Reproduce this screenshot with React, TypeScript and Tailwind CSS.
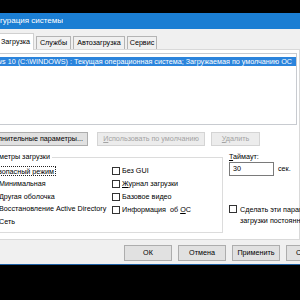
import React from 'react';

const Box: React.FC = () => (
  <div className="w-[8px] h-[8px] shrink-0 border border-[#333333] bg-white" />
);

const TabBtn: React.FC<{ label: string; w: string }> = ({ label, w }) => (
  <div
    className={`${w} ml-[2px] h-[13px] shrink-0 flex items-center justify-center border-t border-l border-r border-[#b4b4b4] bg-[#f0f0f0] whitespace-nowrap`}
  >
    {label}
  </div>
);

const DlgButton: React.FC<{ label: string }> = ({ label }) => (
  <div className="w-[48px] h-[16px] shrink-0 flex items-center justify-center border border-[#adadad] bg-[#e1e1e1] whitespace-nowrap overflow-hidden">
    {label}
  </div>
);

export default function App() {
  return (
    <div className="w-[300px] h-[300px] bg-black overflow-hidden flex flex-col text-[7.2px] leading-none text-black font-['Liberation_Sans',Arial,sans-serif]">
      {/* black strip above the window */}
      <div className="h-[13px] shrink-0" />

      {/* Title bar */}
      <div className="h-[16px] shrink-0 bg-[#1b7ed3] flex items-center">
        <div className="w-[63px] flex justify-end overflow-hidden whitespace-nowrap text-white text-[8px]">
          Конфигурация системы
        </div>
      </div>

      {/* Window body */}
      <div className="h-[235px] shrink-0 bg-[#f0f0f0] flex flex-col">
        {/* Tabs */}
        <div className="h-[20px] shrink-0 flex items-end">
          <div className="relative w-[36px] -ml-[2px] h-[17px] -mb-px shrink-0 flex items-center pl-[3px] bg-white border-t border-r border-[#d0d0d0] whitespace-nowrap">
            Загрузка
          </div>
          <TabBtn label="Службы" w="w-[35px]" />
          <TabBtn label="Автозагрузка" w="w-[52px]" />
          <TabBtn label="Сервис" w="w-[30px]" />
        </div>

        {/* Tab page */}
        <div className="h-[191px] shrink-0 bg-white border-t border-r border-b border-[#d9d9d9] flex flex-col">
          {/* Boot list */}
          <div className="mt-[3px] mr-[2px] h-[72px] shrink-0 border-t border-r border-b border-[#c8cbd0] pt-[3px]">
            <div className="h-[9px] bg-[#2b84dc] flex justify-end items-center overflow-hidden whitespace-nowrap text-white pr-[4px]">
              {'Windows 10 (C:\\WINDOWS) : Текущая операционная система; Загружаемая по умолчанию ОС'}
            </div>
          </div>

          {/* Buttons */}
          <div className="mt-[7px] h-[14px] shrink-0 flex">
            <div className="w-[88px] shrink-0 flex justify-end items-center pr-[4px] overflow-hidden whitespace-nowrap border-t border-r border-b border-[#adadad] bg-[#e1e1e1]">
              Дополнительные параметры...
            </div>
            <div className="ml-[9px] w-[108px] shrink-0 flex justify-center items-center whitespace-nowrap border border-[#d4d4d4] bg-[#ececec] text-[#a3a3a3]">
              <span>
                <span className="underline">И</span>спользовать по умолчанию
              </span>
            </div>
            <div className="ml-[6px] w-[49px] shrink-0 flex justify-center items-center whitespace-nowrap border border-[#d4d4d4] bg-[#ececec] text-[#a3a3a3]">
              <span>
                <span className="underline">У</span>далить
              </span>
            </div>
          </div>

          {/* Boot options + timeout */}
          <div className="mt-[6px] flex">
            {/* Group box */}
            <div className="w-[223px] shrink-0 flex flex-col">
              <div className="h-[10px] flex">
                <div className="w-[50px] shrink-0 flex justify-end items-center overflow-hidden whitespace-nowrap">
                  Параметры загрузки
                </div>
                <div className="flex-1 ml-[2px] h-[5px] self-end border-t border-r border-[#dcdcdc]" />
              </div>
              <div className="h-[71px] border-r border-b border-[#dcdcdc] flex pt-[3px]">
                <div className="w-[112px] shrink-0 flex flex-col">
                  <div className="h-[12.6px] flex items-center">
                    <div className="-ml-[10px] w-[66px] h-[10px] flex justify-end items-center overflow-hidden whitespace-nowrap border border-dotted border-[#222222] pr-[1px]">
                      Безопасный режим
                    </div>
                  </div>
                  <div className="h-[12.6px] -ml-[1px] flex items-center whitespace-nowrap">Минимальная</div>
                  <div className="h-[12.6px] -ml-[1px] flex items-center whitespace-nowrap">Другая оболочка</div>
                  <div className="h-[12.6px] -ml-[1px] flex items-center whitespace-nowrap">Восстановление Active Directory</div>
                  <div className="h-[12.6px] -ml-[1px] flex items-center whitespace-nowrap">Сеть</div>
                </div>
                <div className="-mt-[1px] flex flex-col">
                  <div className="h-[13px] flex items-center whitespace-nowrap">
                    <Box />
                    <span className="ml-[2px]">Без GUI</span>
                  </div>
                  <div className="h-[13px] flex items-center whitespace-nowrap">
                    <Box />
                    <span className="ml-[2px]">
                      <span className="underline">Ж</span>урнал загрузки
                    </span>
                  </div>
                  <div className="h-[13px] flex items-center whitespace-nowrap">
                    <Box />
                    <span className="ml-[2px]">Базовое видео</span>
                  </div>
                  <div className="h-[13px] flex items-center whitespace-nowrap">
                    <Box />
                    <span className="ml-[2px]">
                      Информация{'\u00a0'} об <span className="underline">О</span>С
                    </span>
                  </div>
                </div>
              </div>
            </div>

            {/* Timeout */}
            <div className="ml-[6px] flex flex-col whitespace-nowrap">
              <div className="h-[10px] flex items-center">
                <span>
                  <span className="underline">Т</span>аймаут:
                </span>
              </div>
              <div className="h-[14px] flex items-center">
                <div className="w-[45px] h-[14px] border border-[#7a7a7a] bg-white pl-[3px] flex items-center">30</div>
                <span className="ml-[4px]">сек.</span>
              </div>
              <div className="mt-[29px] flex items-start">
                <Box />
                <div className="ml-[3px] -mt-[1.5px] leading-[11px]">
                  <div>Сделать эти параметры</div>
                  <div>загрузки постоянными</div>
                </div>
              </div>
            </div>
          </div>
        </div>

        {/* Dialog buttons */}
        <div className="pt-[5px] ml-[124px] flex gap-[6px]">
          <DlgButton label="ОК" />
          <DlgButton label="Отмена" />
          <DlgButton label="Применить" />
          <DlgButton label="Справка" />
        </div>
      </div>

      <div className="h-px shrink-0 bg-[#1d5fa3]" />
    </div>
  );
}
